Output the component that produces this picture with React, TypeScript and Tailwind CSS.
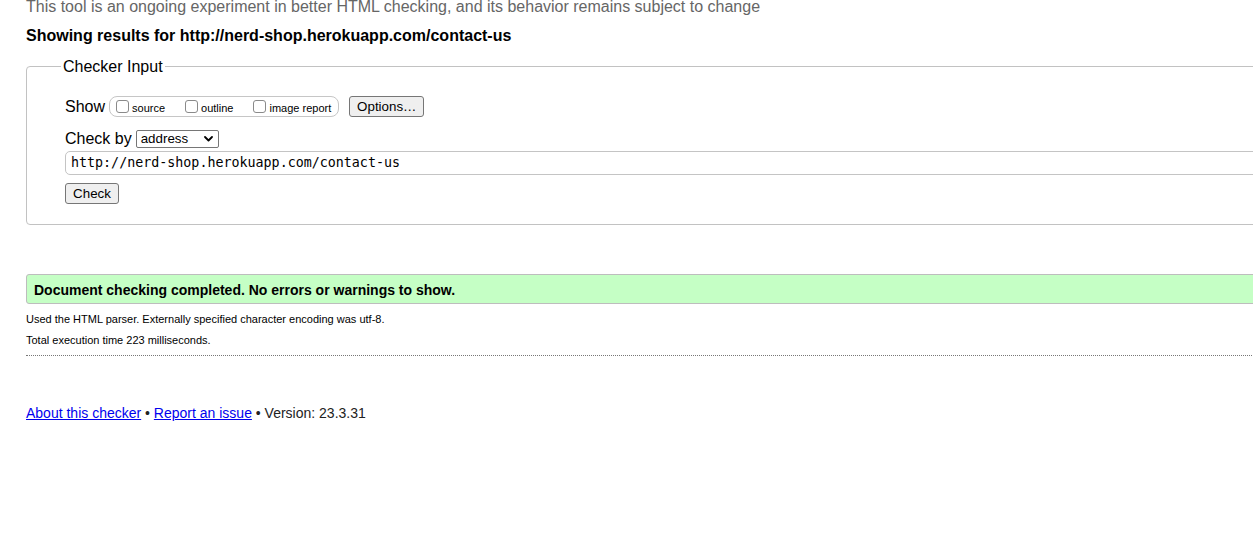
import React from "react";

function Box({ label }: { label: string }) {
  return (
    <span className="flex items-center">
      <span className="w-[13px] h-[13px] border border-[#8a8a8a] rounded-[3px] bg-white box-border mt-[-4px]" />
      <span className="ml-[3px] text-[11px] leading-[13px] text-black">{label}</span>
    </span>
  );
}

export default function App() {
  return (
    <div
      className="w-[1253px] h-[553px] overflow-hidden bg-white text-black"
      style={{ fontFamily: '"Liberation Sans", Arial, sans-serif' }}
    >
      <div className="w-[1330px] pl-[26px] mt-[-3px] flex flex-col">
        <p className="text-[16px] leading-[19px] text-[#666]">
          This tool is an ongoing experiment in better HTML checking, and its behavior remains subject to change
        </p>
        <h2 className="mt-[10px] text-[16px] leading-[19px] font-bold">
          Showing results for http://nerd-shop.herokuapp.com/contact-us
        </h2>

        <fieldset className="mt-[12px] border border-[#c2c2c2] rounded-[4px] pl-[38px] pb-[20px] pt-[20px]">
          <legend className="ml-[-4px] px-[2px] text-[16px] leading-[19px]">Checker Input</legend>

          <div className="flex items-center h-[21px]">
            <span className="text-[16px] leading-[19px]">Show</span>
            <div className="ml-[4px] h-[21px] border border-[#c6c6c6] rounded-[8px] flex items-center pl-[6px] pr-[7px] gap-[20px] pt-[4px]">
              <Box label="source" />
              <Box label="outline" />
              <Box label="image report" />
            </div>
            <button className="ml-[10px] h-[21px] w-[75px] border border-[#767676] rounded-[3px] bg-[#efefef] text-[13.33px] leading-[15px] flex items-center justify-center">
              Options…
            </button>
          </div>

          <div className="mt-[12px] flex items-center h-[19px]">
            <span className="text-[16px] leading-[19px]">Check by</span>
            <div className="ml-[4px] h-[18px] w-[83px] border border-[#767676] rounded-[2px] bg-white flex items-center justify-between pl-[4px] pr-[5px]">
              <span className="text-[13.33px] leading-[15px]">address</span>
              <svg width="9" height="6" viewBox="0 0 9 6" className="mt-[1px]">
                <path d="M1 1 L4.5 4.5 L8 1" fill="none" stroke="#000" strokeWidth="1.8" strokeLinecap="round" strokeLinejoin="round" />
              </svg>
            </div>
          </div>

          <div className="mt-[3px] h-[24px] border border-[#c4c4c4] rounded-[5px] flex items-center pl-[5px] mr-[40px]">
            <span
              className="text-[13.33px] leading-[16px]"
              style={{ fontFamily: '"DejaVu Sans Mono", monospace' }}
            >
              http://nerd-shop.herokuapp.com/contact-us
            </span>
          </div>

          <div className="mt-[8px] flex">
            <button className="h-[21px] w-[54px] border border-[#767676] rounded-[3px] bg-[#efefef] text-[13.33px] leading-[15px] flex items-center justify-center">
              Check
            </button>
          </div>
        </fieldset>

        <div className="mt-[49px] border border-[#bdbdbd] rounded-l-[3px] bg-[#c5ffc5] pl-[7px] pt-[7px] pb-[5px] text-[14px] leading-[16px] font-bold">
          Document checking completed. No errors or warnings to show.
        </div>

        <p className="mt-[9px] text-[11px] leading-[13px]">
          Used the HTML parser. Externally specified character encoding was utf-8.
        </p>
        <p className="mt-[8px] text-[11px] leading-[13px]">Total execution time 223 milliseconds.</p>
        <div className="mt-[8px] border-t border-dotted border-[#777]" />

        <p className="mt-[49px] text-[14px] leading-[16px] text-[#222]">
          <a className="text-[#0000ee] underline" href="#">About this checker</a>
          {" • "}
          <a className="text-[#0000ee] underline" href="#">Report an issue</a>
          {" • Version: 23.3.31"}
        </p>
      </div>
    </div>
  );
}
